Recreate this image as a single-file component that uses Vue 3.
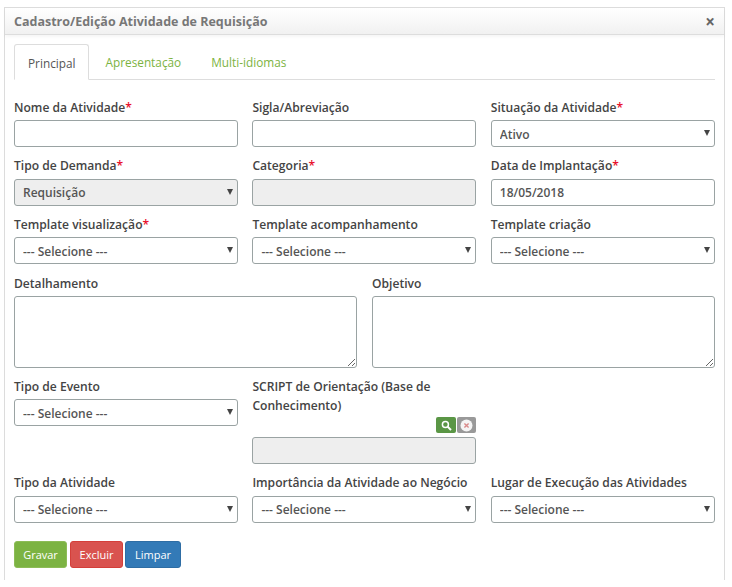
<template>
  <div class="modal">
    <div class="modal-header">
      <span class="modal-title">Cadastro/Edição Atividade de Requisição</span>
      <span class="close">×</span>
    </div>

    <div class="modal-body">
      <ul class="tabs">
        <li v-for="(tab, i) in tabs" :key="tab" class="tab" :class="{ active: i === 0 }">{{ tab }}</li>
      </ul>

      <form class="form" @submit.prevent>
        <div class="row three first">
          <div class="field">
            <label>Nome da Atividade<em>*</em></label>
            <input type="text" />
          </div>
          <div class="field">
            <label>Sigla/Abreviação</label>
            <input type="text" />
          </div>
          <div class="field">
            <label>Situação da Atividade<em>*</em></label>
            <div class="select-box">
              <select><option>Ativo</option></select>
            </div>
          </div>
        </div>

        <div class="row three roomy">
          <div class="field">
            <label>Tipo de Demanda<em>*</em></label>
            <div class="select-box">
              <select disabled><option>Requisição</option></select>
            </div>
          </div>
          <div class="field">
            <label>Categoria<em>*</em></label>
            <input type="text" disabled />
          </div>
          <div class="field">
            <label>Data de Implantação<em>*</em></label>
            <input type="text" value="18/05/2018" />
          </div>
        </div>

        <div class="row three">
          <div class="field" v-for="t in templates" :key="t.label">
            <label>{{ t.label }}<em v-if="t.required">*</em></label>
            <div class="select-box">
              <select><option>--- Selecione ---</option></select>
            </div>
          </div>
        </div>

        <div class="row two">
          <div class="field">
            <label>Detalhamento</label>
            <textarea></textarea>
          </div>
          <div class="field">
            <label>Objetivo</label>
            <textarea></textarea>
          </div>
        </div>

        <div class="row three">
          <div class="field">
            <label>Tipo de Evento</label>
            <div class="select-box">
              <select><option>--- Selecione ---</option></select>
            </div>
          </div>
          <div class="field">
            <label class="script-label">SCRIPT de Orientação (Base de Conhecimento)</label>
            <div class="lookup-actions">
              <button type="button" class="mini search" aria-label="Pesquisar">
                <svg width="11" height="11" viewBox="0 0 11 11">
                  <circle cx="4.4" cy="4.4" r="3" fill="none" stroke="#fff" stroke-width="1.5" />
                  <path d="M6.6 6.6 L10 10" stroke="#fff" stroke-width="2" />
                </svg>
              </button>
              <button type="button" class="mini clear" aria-label="Limpar">
                <svg width="13" height="13" viewBox="0 0 13 13">
                  <circle cx="6.5" cy="6.5" r="6" fill="#f4f4f4" />
                  <path d="M4.4 4.4 L8.6 8.6 M8.6 4.4 L4.4 8.6" stroke="#d98a8a" stroke-width="1.4" />
                </svg>
              </button>
            </div>
            <input type="text" disabled />
          </div>
        </div>

        <div class="row three roomy">
          <div class="field" v-for="label in lastRow" :key="label">
            <label>{{ label }}</label>
            <div class="select-box">
              <select><option>--- Selecione ---</option></select>
            </div>
          </div>
        </div>

        <div class="actions">
          <button type="button" class="btn green">Gravar</button>
          <button type="button" class="btn red">Excluir</button>
          <button type="button" class="btn blue">Limpar</button>
        </div>
      </form>
    </div>
  </div>
</template>

<script setup>
const tabs = ['Principal', 'Apresentação', 'Multi-idiomas']

const templates = [
  { label: 'Template visualização', required: true },
  { label: 'Template acompanhamento', required: false },
  { label: 'Template criação', required: false }
]

const lastRow = [
  'Tipo da Atividade',
  'Importância da Atividade ao Negócio',
  'Lugar de Execução das Atividades'
]
</script>

<style>
html,
body {
  background: #fff;
}
</style>

<style scoped>
.modal {
  box-sizing: border-box;
  width: 721px;
  height: 573px;
  margin: 7px 0 0 4px;
  border: 1px solid #dcdcdc;
  border-bottom: none;
  font-family: "Open Sans", sans-serif;
  font-size: 12px;
  color: #444;
}

.modal-header {
  box-sizing: border-box;
  display: flex;
  justify-content: space-between;
  align-items: center;
  height: 27px;
  padding: 0 9px;
  background: linear-gradient(#fff, #f1f1f1);
  border-bottom: 1px solid #ddd;
  box-shadow: 0 2px 3px rgba(0, 0, 0, 0.04);
}

.modal-title {
  font-size: 12.5px;
  font-weight: 700;
  color: #777;
}

.close {
  font-size: 17px;
  font-weight: 700;
  line-height: 1;
  color: #666;
}

.modal-body {
  padding: 9px 9px 0;
}

.tabs {
  display: flex;
  height: 36px;
  margin: 0;
  padding: 0;
  list-style: none;
  box-sizing: border-box;
  border-bottom: 1px solid #ddd;
}

.tab {
  box-sizing: border-box;
  height: 36px;
  padding: 10px 15px 0;
  font-size: 11.8px;
  color: #7cb342;
  line-height: 16px;
}

.tab.active {
  color: #555;
  background: #fff;
  border: 1px solid #ddd;
  border-bottom-color: #fff;
  border-radius: 3px 3px 0 0;
  padding: 10px 12px 0 13px;
  margin-right: 2px;
}

.row {
  display: grid;
  column-gap: 14.4px;
  width: 701px;
  margin-top: 10px;
}

.row.first {
  margin-top: 19px;
}

.three {
  grid-template-columns: repeat(3, 224px);
}

.two {
  grid-template-columns: repeat(2, 343px);
  column-gap: 15px;
  margin-top: 11px;
}

.field {
  display: flex;
  flex-direction: column;
  min-width: 0;
}

label {
  font-size: 12.1px;
  font-weight: 600;
  line-height: 18px;
  margin-bottom: 3px;
  color: #444;
}

.roomy label {
  margin-bottom: 4px;
}

label em {
  font-style: normal;
  color: #e8112d;
}

.script-label {
  line-height: 19px;
  margin-top: -1px;
  margin-bottom: 2px;
}

input,
select,
textarea {
  display: block;
  box-sizing: border-box;
  width: 100%;
  height: 27px;
  margin: 0;
  padding: 0 8px;
  border: 1px solid #9aa3a3;
  border-radius: 3px;
  background: #fff;
  font: 600 12px "Open Sans", sans-serif;
  color: #555;
  outline: none;
}

input:disabled,
select:disabled {
  background: #eee;
  opacity: 1;
  color: #555;
}

textarea {
  height: 72px;
  resize: vertical;
}

select {
  appearance: none;
  -webkit-appearance: none;
  padding-top: 2px;
}

.roomy select {
  padding-top: 0;
}

.select-box {
  position: relative;
}

.select-box::after {
  content: "";
  position: absolute;
  right: 5px;
  top: 10px;
  border-left: 3.5px solid transparent;
  border-right: 3.5px solid transparent;
  border-top: 6px solid #444;
  pointer-events: none;
}

.lookup-actions {
  display: flex;
  justify-content: flex-end;
  gap: 1px;
  height: 16px;
  margin: 0 0 4px;
}

.mini {
  display: flex;
  align-items: center;
  justify-content: center;
  width: 20px;
  height: 16px;
  padding: 0;
  border: none;
  border-radius: 2px;
}

.mini.search {
  background: #5a9645;
}

.mini.clear {
  width: 19px;
  background: #999;
}

.actions {
  display: flex;
  gap: 3px;
  margin-top: 18px;
}

.btn {
  box-sizing: border-box;
  width: 53px;
  height: 27px;
  padding: 0;
  border: 1px solid;
  border-radius: 3px;
  font: 400 11px "Open Sans", sans-serif;
  color: #fff;
}

.btn.blue {
  width: 56px;
  margin-left: -1px;
}

.green {
  background: #7cb342;
  border-color: #8dbc57;
}

.red {
  background: #d9534f;
  border-color: #d43f3a;
}

.blue {
  background: #337ab7;
  border-color: #2e6da4;
}
</style>
